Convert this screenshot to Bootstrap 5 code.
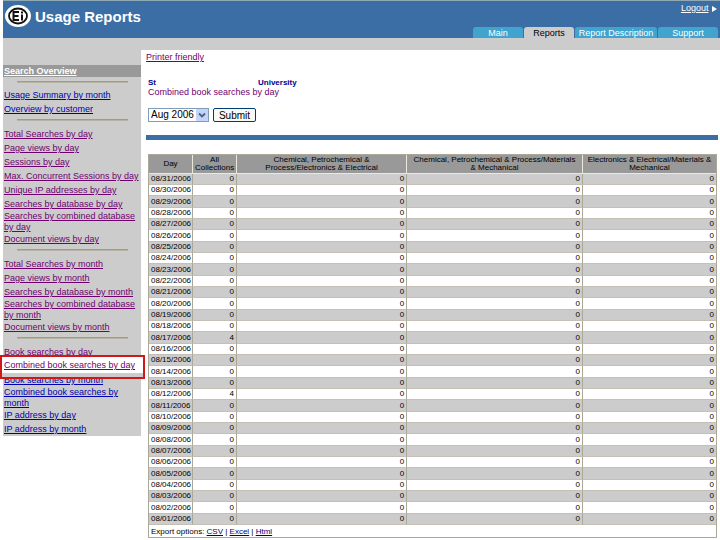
<!DOCTYPE html>
<html lang="en">
<head>
<meta charset="utf-8">
<meta name="viewport" content="width=device-width, initial-scale=1">
<title>Usage Reports</title>
<link href="https://cdn.jsdelivr.net/npm/bootstrap@5.3.0/dist/css/bootstrap.min.css" rel="stylesheet">
<style>
body{font-family:"Liberation Sans",Arial,sans-serif;font-size:9px;line-height:12px;color:#000;background:#fff}
.topbar{background:#3b6ea5;border-top:1px solid #8fa9b5;margin-left:3px;height:38px}
.brand{font-size:15px;line-height:18px;font-weight:700;color:#fff;padding:3px 0 0 1px}
.logout{color:#fff;font-size:9px;line-height:12px;padding:1px 2px 0 0}
.logout a{color:#fff}
.tabs{padding-right:2px}
.tabs a{display:block;height:11px;line-height:12px;font-size:9px;text-align:center;color:#fff;text-decoration:none;background:#40a4cf;border-radius:3px 3px 0 0;margin-left:1px;white-space:nowrap}
.tabs a.on{background:#ccc;color:#000}
.t-main{width:50px}.t-rep{width:50px}.t-desc{width:82px}.t-sup{width:60px}
.strip{background:#ccc;height:12px;margin-left:3px}
.side{width:138px;margin-left:3px;background:#ccc;padding:15px 0 0}
.side a{display:block;color:#700070;line-height:11px;padding:0 0 0 1px;margin-bottom:3px}
.side a.new{color:#0000b0}
.side a.tight{margin-bottom:1px}
.side h2{font-size:9px;line-height:12px;font-weight:700;background:#999;margin:0;padding-left:1px}
.side h2 a{color:#fff;margin:0;line-height:12px;padding:0}
.side hr{margin:4px 13px 8px 14px;border:0;border-top:1px solid #a09c8c;border-bottom:1px solid #b8b4a4;opacity:1}
.side h2 + hr{margin-bottom:7px}
.side .picked{border:2px solid #d01818;background:linear-gradient(#fff 16px,#ccc 16px);margin:-4px -4px -4px -3px;padding:3px 0 6px 2px;position:relative}
.side .picked a{margin:0;padding:0}
.pane{padding:1px 2px 0 5px}
.pane a.print{color:#700070}
.org{font-size:8px;line-height:9px;font-weight:700;color:#000090;margin:15px 0 0 2px}
.org .gap{width:102px}
.rtitle{font-size:9px;line-height:10px;color:#700070;margin:0 0 0 2px;font-weight:400}
.pick{margin:11px 0 0 2px}
.pick select{font-size:10px;width:61px;height:14px;padding:0 0 0 2px;border:1px solid #7f9db9;border-radius:0;color:#000;line-height:12px;background:#fff url("data:image/svg+xml,%3Csvg xmlns='http://www.w3.org/2000/svg' width='12' height='12'%3E%3Crect width='12' height='12' rx='1' fill='%23c3d3fa'/%3E%3Cpath d='M3 4.500l3 3 3-3' fill='none' stroke='%234d6185' stroke-width='1.800'/%3E%3C/svg%3E") no-repeat right center/12px 12px;appearance:none}
.pick button{font-size:10px;line-height:11px;width:43px;height:14px;padding:0;border:1px solid #003c74;border-radius:2px;background:#f8f8f4;color:#000}
.rule{height:5px;background:#3b6ea5;margin:13px 0 14px}
.rep{width:calc(100% - 3px);margin-left:2px;table-layout:fixed;border-collapse:separate;border-spacing:0;border:1px solid #aca899;font-size:8px;line-height:10px}
.rep th{background:#999;font-weight:400;text-align:center;vertical-align:middle;padding:0 2px;line-height:8px;height:19px;border-right:1px solid #ece9d8;border-bottom:1px solid #ece9d8}
.rep th:nth-child(n+3){padding:0 4px}
.rep tbody td{height:11px;padding:0 2px 0 0;text-align:right;border-right:1px solid #aca899;border-bottom:1px solid #c4c1b4}
.rep tbody tr:nth-child(3n) td{height:12px}
.rep tbody tr:nth-child(odd) td{background:#ccc}
.rep tbody td:first-child{text-align:left;padding-left:2px}
.rep td:last-child,.rep th:last-child{border-right:0!important}
.rep tfoot td{height:12px;padding:0 2px;line-height:11px}
.rep tfoot a{color:#000080}
</style>
<script src="https://cdn.jsdelivr.net/npm/bootstrap@5.3.0/dist/js/bootstrap.bundle.min.js"></script>
</head>
<body>
<header class="topbar d-flex justify-content-between">
  <div class="brand d-flex align-items-start gap-1">
    <svg width="27" height="24" viewBox="0 0 27 24" aria-hidden="true"><ellipse cx="14" cy="12" rx="13" ry="11" fill="#fff"/><ellipse cx="14" cy="12" rx="9" ry="7.500" fill="none" stroke="#111" stroke-width="1.800"/><path d="M15 8H9.500v8H15M9.500 12H14.500M18 10.500V16.500M18 7.500v2" fill="none" stroke="#111" stroke-width="2"/></svg>
    <span class="pt-1">Usage Reports</span>
  </div>
  <div class="d-flex flex-column justify-content-between align-items-end">
    <div class="logout"><a href="#">Logout</a> <svg width="7" height="8" viewBox="0 0 7 8" aria-hidden="true"><path d="M1 1l5 3-5 3z" fill="#fff"/></svg></div>
    <nav class="tabs d-flex"><a class="t-main" href="#">Main</a><a class="t-rep on" href="#">Reports</a><a class="t-desc" href="#">Report Description</a><a class="t-sup" href="#">Support</a></nav>
  </div>
</header>
<div class="strip"></div>
<div class="d-flex align-items-start">
  <nav class="side flex-shrink-0">
    <h2><a href="#">Search Overview</a></h2>
    <hr>
    <a class="new" href="#">Usage Summary by month</a>
    <a class="new" href="#">Overview by customer</a>
    <hr>
    <a href="#">Total Searches by day</a>
    <a href="#">Page views by day</a>
    <a href="#">Sessions by day</a>
    <a href="#">Max. Concurrent Sessions by day</a>
    <a href="#">Unique IP addresses by day</a>
    <a class="tight" href="#">Searches by database by day</a>
    <a class="tight" href="#">Searches by combined database by day</a>
    <a href="#">Document views by day</a>
    <hr>
    <a href="#">Total Searches by month</a>
    <a href="#">Page views by month</a>
    <a class="tight" href="#">Searches by database by month</a>
    <a class="tight" href="#">Searches by combined database by month</a>
    <a href="#">Document views by month</a>
    <hr>
    <a class="tight" href="#">Book searches by day</a>
    <div class="picked"><a href="#">Combined book searches by day</a></div>
    <a class="new tight" href="#">Book searches by month</a>
    <a class="new tight" href="#">Combined book searches by month</a>
    <a class="new" href="#">IP address by day</a>
    <a class="new tight" href="#">IP address by month</a>
  </nav>
  <main class="pane flex-grow-1">
    <a class="print" href="#">Printer friendly</a>
    <div class="org d-flex"><span>St</span><span class="gap"></span><span>University</span></div>
    <h1 class="rtitle">Combined book searches by day</h1>
    <form class="pick d-flex gap-1"><select aria-label="Month"><option>Aug 2006</option></select><button type="button">Submit</button></form>
    <div class="rule"></div>
    <table class="rep">
      <colgroup><col style="width:44px"><col style="width:44px"><col style="width:30%"><col style="width:31%"><col></colgroup>
      <thead><tr><th>Day</th><th>All Collections</th><th>Chemical, Petrochemical &amp; Process/Electronics &amp; Electrical</th><th>Chemical, Petrochemical &amp; Process/Materials &amp; Mechanical</th><th>Electronics &amp; Electrical/Materials &amp; Mechanical</th></tr></thead>
      <tbody id="days"></tbody>
      <tfoot><tr><td colspan="5">Export options: <a href="#">CSV</a> | <a href="#">Excel</a> | <a href="#">Html</a></td></tr></tfoot>
    </table>
  </main>
</div>
<script>
const totals = {17: 4, 12: 4};
let rows = "";
for (let d = 31; d > 0; d--) {
  rows += `<tr><td>08/${String(d).padStart(2, "0")}/2006</td><td>${totals[d] || 0}</td><td>0</td><td>0</td><td>0</td></tr>`;
}
document.getElementById("days").innerHTML = rows;
</script>
</body>
</html>
